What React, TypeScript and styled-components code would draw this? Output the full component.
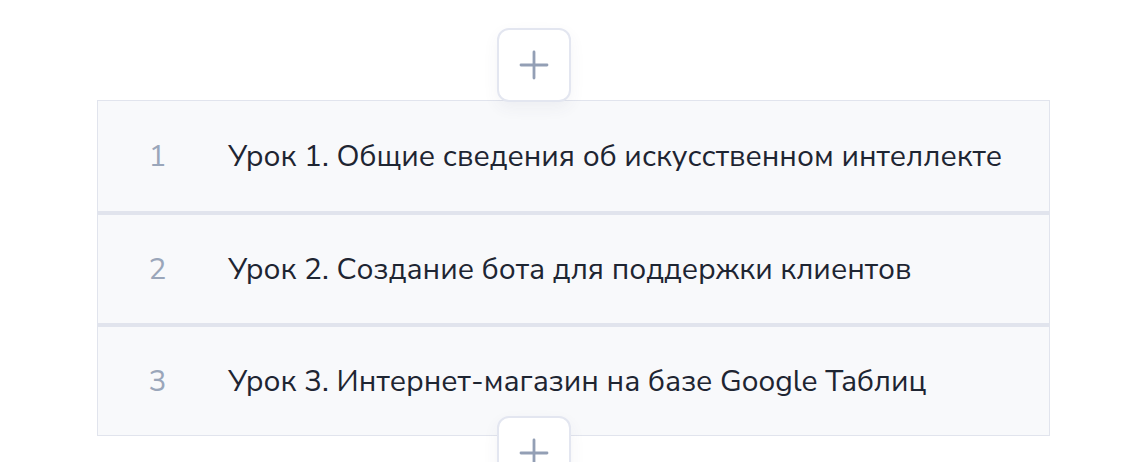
import React from "react";
import styled, { createGlobalStyle } from "styled-components";

const Global = createGlobalStyle`
  html, body { margin: 0; padding: 0; background: #ffffff; }
  body { font-family: "Nunito Sans", "Noto Sans", "Open Sans", sans-serif; }
`;

const Page = styled.div`
  width: 1126px;
  height: 462px;
  overflow: hidden;
  padding: 28px 0 0 97px;
  box-sizing: border-box;
  display: flex;
  flex-direction: column;
`;

const Board = styled.div`
  width: 953px;
  display: flex;
  flex-direction: column;
`;

const AddButton = styled.button<{ $overlap: number }>`
  position: relative;
  z-index: 2;
  width: 74px;
  height: 74px;
  margin-left: 400px;
  margin-bottom: ${(p) => -p.$overlap}px;
  margin-top: ${(p) => (p.$overlap > 10 ? -20 : 0)}px;
  flex-shrink: 0;
  border: 2px solid #e3e6f0;
  border-radius: 12px;
  background: #ffffff;
  box-shadow: 0 6px 16px rgba(60, 72, 100, 0.06);
  display: flex;
  align-items: center;
  justify-content: center;
  padding: 0;
  cursor: pointer;
`;

const Row = styled.div<{ $first: boolean }>`
  display: grid;
  grid-template-columns: 119px 1fr;
  align-items: center;
  height: 112px;
  box-sizing: border-box;
  border: 1px solid #e1e4ed;
  border-top: ${(p) => (p.$first ? "1px" : "3px")} solid #e1e4ed;
  background: #f8f9fb;
`;

const Num = styled.span`
  text-align: center;
  font-size: 30px;
  color: #9aa6ba;
`;

const Title = styled.span`
  padding-left: 11px;
  font-size: 30px;
  color: #1e2532;
`;

const Plus = () => (
  <svg width="30" height="30" viewBox="0 0 30 30" fill="none">
    <path d="M15 2v26M2 15h26" stroke="#939fb5" strokeWidth="2.8" strokeLinecap="round" />
  </svg>
);

const lessons = [
  "Урок 1. Общие сведения об искусственном интеллекте",
  "Урок 2. Создание бота для поддержки клиентов",
  "Урок 3. Интернет-магазин на базе Google Таблиц",
];

export default function App() {
  return (
    <>
      <Global />
      <Page>
        <Board>
          <AddButton $overlap={2} aria-label="add">
            <Plus />
          </AddButton>
          {lessons.map((t, i) => (
            <Row key={i} $first={i === 0}>
              <Num>{i + 1}</Num>
              <Title>{t}</Title>
            </Row>
          ))}
          <AddButton $overlap={20} aria-label="add">
            <Plus />
          </AddButton>
        </Board>
      </Page>
    </>
  );
}
